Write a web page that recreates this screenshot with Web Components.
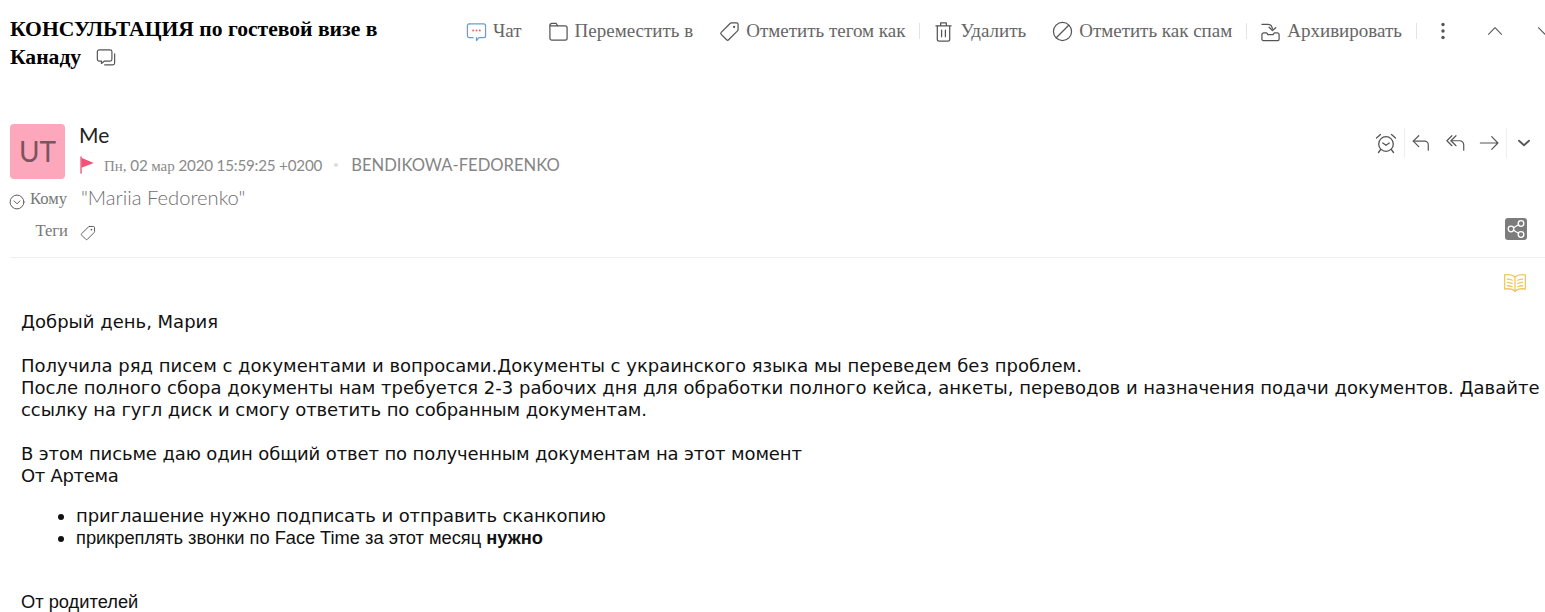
<!DOCTYPE html>
<html lang="ru">
<head>
<meta charset="utf-8">
<title>КОНСУЛЬТАЦИЯ</title>
<style>
  html, body { margin: 0; padding: 0; background: #fff; overflow: hidden; }
  body { width: 1545px; height: 612px; font-family: "Liberation Serif", serif; }
</style>
</head>
<body>
<mail-view></mail-view>

<template id="page">
  <style>
    :host { display: block; }
    .gap { height: 22px; }
    ul { margin: 18px 0 0; padding-left: 55px; }
    .arial { font-family: "Liberation Sans", sans-serif; font-size: 18.3px; }
  </style>
  <mail-header>КОНСУЛЬТАЦИЯ по гостевой визе в Канаду</mail-header>
  <mail-meta></mail-meta>
  <mail-body>
    <div>Добрый день, Мария</div>
    <div class="gap"></div>
    <div>Получила ряд писем с документами и вопросами.Документы с украинского языка мы переведем без проблем.</div>
    <div>После полного сбора документы нам требуется 2-3 рабочих дня для обработки полного кейса, анкеты, переводов и назначения подачи документов. Давайте</div>
    <div style="letter-spacing:-.08px">ссылку на гугл диск и смогу ответить по собранным документам.</div>
    <div class="gap"></div>
    <div style="letter-spacing:-.12px">В этом письме даю один общий ответ по полученным документам на этот момент</div>
    <div style="letter-spacing:-.3px">От Артема</div>
    <ul>
      <li style="letter-spacing:-.1px">приглашение нужно подписать и отправить сканкопию</li>
      <li class="arial">прикреплять звонки по Face Time за этот месяц <b>нужно</b></li>
    </ul>
    <div style="height:42px"></div>
    <div class="arial">От родителей</div>
  </mail-body>
</template>

<script>
const ICONS = {
  chat: '<path d="M3.500 3h15a2 2 0 0 1 2 2v10.500a2 2 0 0 1-2 2h-5l-2.500 3v-3" stroke="#6f9bd1"/><path d="M7.500 17.500h-4a2 2 0 0 1-2-2V5a2 2 0 0 1 2-2" stroke="#6f9bd1"/><g fill="#e0636b" stroke="none"><circle cx="7.500" cy="10" r="1"/><circle cx="11" cy="10" r="1"/><circle cx="14.500" cy="10" r="1"/></g>',
  folder: '<path d="M2 4.500A2 2 0 0 1 4 2.500h4.500L10 5h8a2 2 0 0 1 2 2v11a2 2 0 0 1-2 2H4a2 2 0 0 1-2-2z"/><path d="M2 5h8"/>',
  tag: '<path d="M13 2h5.500A1.500 1.500 0 0 1 20 3.500V9a2 2 0 0 1-.6 1.400l-9.300 9.300a1.500 1.500 0 0 1-2.100 0l-5.700-5.700a1.500 1.500 0 0 1 0-2.100l9.300-9.300A2 2 0 0 1 13 2z"/><circle cx="15.800" cy="6.200" r="1.200" fill="#555" stroke="none"/>',
  trash: '<path d="M4.500 5.500V19a2 2 0 0 0 2 2h9a2 2 0 0 0 2-2V5.500"/><path d="M3 5h16M8 5V2h6v3M9 9.500v7M13 9.500v7"/>',
  ban: '<circle cx="11" cy="11" r="9.500"/><path d="M4.500 17.500L17.500 4.500"/>',
  archive: '<path d="M2 17v-2.500a2 2 0 0 1 2-2h2.500c.6 0 1 .5 1.300 1l.4.800h5.600l.4-.800c.3-.5.7-1 1.300-1H18a2 2 0 0 1 2 2V19a1.500 1.500 0 0 1-1.500 1.500h-15A1.500 1.500 0 0 1 2 19z"/><path d="M2 3.500h6.500c2.500 0 4 1.500 4.500 4.500"/><path d="M9.500 6.500l3.500 3.500 3.500-3"/>',
  dots: '<g fill="#555" stroke="none"><circle cx="11" cy="4.500" r="1.700"/><circle cx="11" cy="11" r="1.700"/><circle cx="11" cy="17.500" r="1.700"/></g>',
  up: '<path d="M3 15l8-8 8 8"/>',
  down: '<path d="M3 7l8 8 8-8"/>',
  threads: '<path d="M3.500 2h12a2 2 0 0 1 2 2v8.500a2 2 0 0 1-2 2H9L6 17v-2.500H3.500a2 2 0 0 1-2-2V4a2 2 0 0 1 2-2z"/><path d="M20.500 6.500v10a2 2 0 0 1-2 2H9.500"/>',
  alarm: '<circle cx="11" cy="12" r="7.300"/><path d="M7.800 11l3.200 2.300 3.200-2.300M5.700 17.500L3.500 20.500M16.300 17.500l2.200 3M1.500 6L5.500 2.500M20.500 6L16.500 2.500"/>',
  reply: '<path d="M8.500 3L2.500 9l6 6"/><path d="M2.500 9h12.500a4 4 0 0 1 4 4v6"/>',
  replyall: '<path d="M6.500 3L1 8.500l5.500 5.500"/><path d="M11 3L5.500 8.500l5.500 5.500"/><path d="M5.500 8.500H15a4.500 4.500 0 0 1 4.500 4.500v6"/>',
  forward: '<path d="M1.500 11h19M14 4l6.800 7-6.800 7"/>',
  chevron: '<path d="M5.500 8.500L11 13.500l5.500-5" stroke-width="2"/>',
  circledown: '<circle cx="11" cy="11" r="9.500"/><path d="M7 9.500l4 4 4-4"/>',
  share: '<circle cx="6" cy="11" r="2.800"/><circle cx="16" cy="5.500" r="2.800"/><circle cx="16" cy="16.500" r="2.800"/><path d="M8.500 9.700l5-2.900M8.500 12.300l5 2.900"/>',
  book: '<path d="M11 5.500C9 3.500 5 3 1.500 3.500v13c3.500-.5 7.500 0 9.500 2 2-2 6-2.500 9.500-2v-13C17 3 13 3.500 11 5.500z"/><path d="M11 5.500v13M4 7.500c1.500 0 3 .3 4.500 1M4 10.500c1.500 0 3 .3 4.500 1M4 13.500c1.500 0 3 .3 4.500 1M18 7.500c-1.500 0-3 .3-4.500 1M18 10.500c-1.500 0-3 .3-4.500 1M18 13.500c-1.500 0-3 .3-4.500 1"/>',
  flag: '<path d="M2.500 1v20" stroke="#ef4e6c" stroke-width="1.600"/><path d="M3 2l15 6.500-15 6z" fill="#f4527a" stroke="none"/>'
};

class MailIcon extends HTMLElement {
  constructor() {
    super();
    this.attachShadow({ mode: 'open' });
  }
  connectedCallback() {
    const name = this.getAttribute('name');
    const size = this.getAttribute('size') || '22';
    const color = this.getAttribute('color') || '#555';
    const sw = this.getAttribute('sw') || '1.300';
    this.shadowRoot.innerHTML = `
      <style>:host { display: inline-flex; flex: none; width: ${size}px; height: ${size}px; } svg { display: block; }</style>
      <svg width="${size}" height="${size}" viewBox="0 0 22 22" fill="none" stroke="${color}" stroke-width="${sw}" stroke-linecap="round" stroke-linejoin="round">${ICONS[name]}</svg>`;
  }
}
customElements.define('mail-icon', MailIcon);

// toolbar button: icon + label
class ToolButton extends HTMLElement {
  constructor() {
    super();
    this.attachShadow({ mode: 'open' });
  }
  connectedCallback() {
    const icon = this.getAttribute('icon');
    this.shadowRoot.innerHTML = `
      <style>
        :host { display: inline-flex; align-items: center; gap: 6px; flex: none; font-size: 19px; color: #666; }
      </style>
      <mail-icon name="${icon}" size="21"></mail-icon><slot></slot>`;
  }
}
customElements.define('tool-button', ToolButton);

class MailToolbar extends HTMLElement {
  constructor() {
    super();
    this.attachShadow({ mode: 'open' });
    this.shadowRoot.innerHTML = `
      <style>
        :host { display: flex; flex: none; align-items: center; height: 22px; white-space: nowrap; }
        .sep { flex: none; width: 1px; height: 16px; background: #e4e4e4; }
      </style>
      <tool-button icon="chat" style="margin-right:26px">Чат</tool-button>
      <tool-button icon="folder" style="margin-right:26px">Переместить в</tool-button>
      <tool-button icon="tag" style="margin-right:14px">Отметить тегом как</tool-button>
      <span class="sep" style="margin-right:13px"></span>
      <tool-button icon="trash" style="margin-right:26px">Удалить</tool-button>
      <tool-button icon="ban" style="margin-right:14px">Отметить как спам</tool-button>
      <span class="sep" style="margin-right:13px"></span>
      <tool-button icon="archive" style="margin-right:14px">Архивировать</tool-button>
      <span class="sep" style="margin-right:15px"></span>
      <mail-icon name="dots" style="margin-right:32px"></mail-icon>
      <mail-icon name="up" size="18" style="margin-right:32px"></mail-icon>
      <mail-icon name="down" size="18"></mail-icon>`;
  }
}
customElements.define('mail-toolbar', MailToolbar);

class MailHeader extends HTMLElement {
  constructor() {
    super();
    this.attachShadow({ mode: 'open' });
    this.shadowRoot.innerHTML = `
      <style>
        :host { display: flex; align-items: flex-start; height: 115px; box-sizing: border-box; padding: 15px 0 0 10px; }
        h1 { margin: 0; width: 456px; flex: none; box-sizing: border-box; padding-right: 60px; font: bold 21.6px/28px "Liberation Serif", serif; color: #000; }
        h1 mail-icon { vertical-align: -4px; margin-left: 15px; }
        mail-toolbar { margin-top: 5px; }
      </style>
      <h1><slot></slot><mail-icon name="threads" size="20"></mail-icon></h1>
      <mail-toolbar></mail-toolbar>`;
  }
}
customElements.define('mail-header', MailHeader);

class MailMeta extends HTMLElement {
  constructor() {
    super();
    this.attachShadow({ mode: 'open' });
    this.shadowRoot.innerHTML = `
      <style>
        :host { display: block; height: 143px; box-sizing: border-box; margin: 0 0 0 10px; padding-top: 9px; border-bottom: 1px solid #eee; color: #888; }
        .top { display: flex; gap: 14px; }
        .avatar { width: 55px; height: 55px; flex: none; box-sizing: border-box; padding-bottom: 2px; border-radius: 4px; background: #fda7bd; color: #7a5560; font: 400 28px Lato, sans-serif; display: flex; align-items: center; justify-content: center; }
        .name { font: 21px/22px Lato, sans-serif; color: #222; }
        .info { display: flex; align-items: center; margin-top: 7px; height: 24px; }
        .date { font: 15.200px Lato, sans-serif; letter-spacing: -.2px; margin-left: 7px; color: #8a8a8a; }
        .date i { font: 15px "Liberation Serif", serif; letter-spacing: 0; }
        .dot { width: 4px; height: 4px; border-radius: 50%; background: #ddd; margin: 0 13px 0 12px; }
        .acct { font: 16.600px Lato, sans-serif; color: #858585; }
        .row { display: flex; align-items: center; }
        .lab { width: 58px; flex: none; font-size: 16.600px; color: #777; text-align: right; }
        .to { margin-top: 6px; height: 26px; }
        .to .lab { display: flex; justify-content: flex-end; gap: 5px; margin-top: 2px; margin-left: -1px; }
        .to .lab mail-icon { margin-top: 5px; }
        .to .val { margin-left: 14px; font: 300 20.200px Lato, sans-serif; color: #6f6f6f; margin-top: -2px; }
        .tags { margin-top: 6px; height: 26px; }
        .tags .lab { margin-top: 2px; }
        .tags > mail-icon { margin-left: 12px; margin-top: 5px; }
        .share { margin-left: auto; margin-right: 18px; margin-top: -2px; width: 22px; height: 22px; border-radius: 3px; background: #7c7c7c; }
        .actions { margin-left: auto; height: 30px; margin-top: 4px; display: flex; align-items: center; }
        .sep { width: 1px; height: 30px; background: #eee; }
      </style>
      <div class="top">
        <div class="avatar">UT</div>
        <div>
          <div class="name">Me</div>
          <div class="info">
            <mail-icon name="flag" size="18"></mail-icon>
            <span class="date"><i>Пн,</i> 02 <i>мар</i> 2020 15:59:25 +0200</span>
            <span class="dot"></span>
            <span class="acct">BENDIKOWA-FEDORENKO</span>
          </div>
        </div>
        <div class="actions">
          <mail-icon name="alarm" style="margin-right:7px"></mail-icon>
          <span class="sep" style="margin-right:6px"></span>
          <mail-icon name="reply" size="20" style="margin-right:15px"></mail-icon>
          <mail-icon name="replyall" size="20" style="margin-right:13px"></mail-icon>
          <mail-icon name="forward" size="20" style="margin-right:7px"></mail-icon>
          <span class="sep" style="margin-right:7px"></span>
          <mail-icon name="chevron" size="20" style="margin-right:11px"></mail-icon>
        </div>
      </div>
      <div class="row to">
        <div class="lab"><mail-icon name="circledown" size="16"></mail-icon>Кому</div>
        <div class="val">"Mariia Fedorenko"</div>
      </div>
      <div class="row tags">
        <div class="lab">Теги</div>
        <mail-icon name="tag" size="16"></mail-icon>
        <div class="share"><mail-icon name="share" color="#fff" size="22"></mail-icon></div>
      </div>`;
  }
}
customElements.define('mail-meta', MailMeta);

class MailBody extends HTMLElement {
  constructor() {
    super();
    this.attachShadow({ mode: 'open' });
    this.shadowRoot.innerHTML = `
      <style>
        :host { display: block; padding: 12px 0 0 21px; font: 18px/22px "DejaVu Sans", sans-serif; color: #111; white-space: nowrap; }
        .bookrow { display: flex; justify-content: flex-end; height: 41px; padding-right: 18px; }
        mail-icon { margin-top: 1px; }
      </style>
      <div class="bookrow"><mail-icon name="book" color="#eec95c" size="24" sw="1.200"></mail-icon></div>
      <slot></slot>`;
  }
}
customElements.define('mail-body', MailBody);

class MailView extends HTMLElement {
  constructor() {
    super();
    this.attachShadow({ mode: 'open' });
    this.shadowRoot.appendChild(document.getElementById('page').content.cloneNode(true));
  }
}
customElements.define('mail-view', MailView);
</script>
</body>
</html>
